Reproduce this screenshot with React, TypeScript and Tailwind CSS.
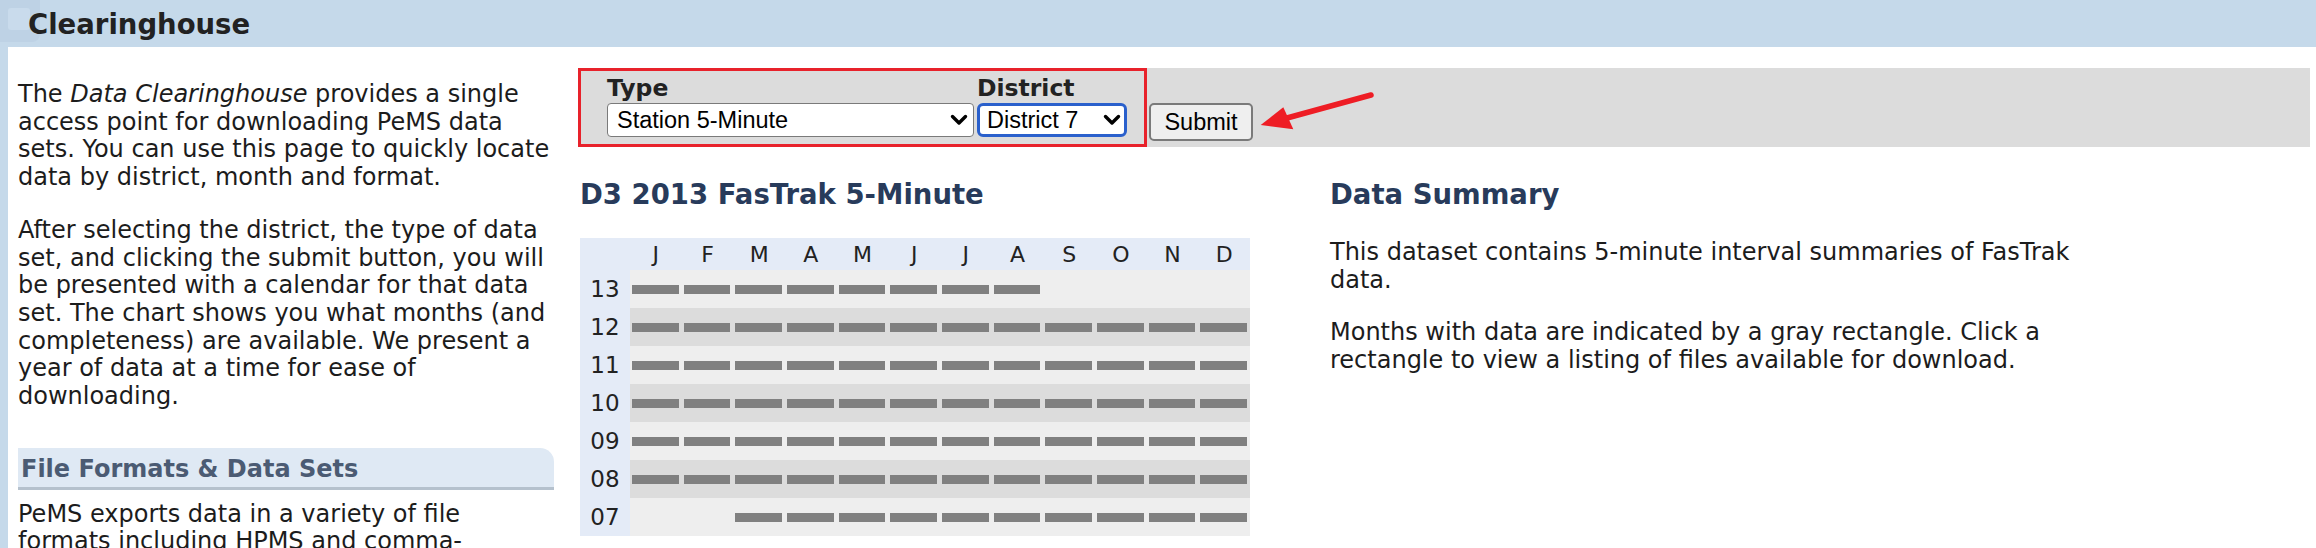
import React from 'react';

const months = ['J', 'F', 'M', 'A', 'M', 'J', 'J', 'A', 'S', 'O', 'N', 'D'];

// which months have data, per year row
const years = [
  { label: '13', from: 0, to: 8 },
  { label: '12', from: 0, to: 12 },
  { label: '11', from: 0, to: 12 },
  { label: '10', from: 0, to: 12 },
  { label: '09', from: 0, to: 12 },
  { label: '08', from: 0, to: 12 },
  { label: '07', from: 2, to: 12 },
];

function Chevron() {
  return (
    <svg
      width="18"
      height="12"
      viewBox="0 0 18 12"
      className="pointer-events-none absolute right-[6px] top-1/2 -translate-y-1/2"
    >
      <path d="M2.5 2.5 L9 9 L15.5 2.5" fill="none" stroke="#000" strokeWidth="3.4" strokeLinecap="round" strokeLinejoin="round" />
    </svg>
  );
}

function Calendar() {
  return (
    <div className="grid w-[670px] grid-cols-[50px_repeat(12,minmax(0,1fr))] bg-[#e4ebf7] font-['DejaVu_Sans',Verdana,sans-serif] text-[#222]">
      <div className="h-[32px]" />
      {months.map((m, i) => (
        <div key={i} className="flex h-[32px] items-center justify-center text-[22px]">
          {m}
        </div>
      ))}
      {years.map((y, r) => (
        <React.Fragment key={y.label}>
          <div className="flex h-[38px] items-center justify-center text-[23px]">{y.label}</div>
          {months.map((_, i) => (
            <div
              key={i}
              className={`flex h-[38px] items-center pl-[2px] pr-[3px] ${r % 2 === 0 ? 'bg-[#eeeeee]' : 'bg-[#dcdcdc]'}`}
            >
              {i >= y.from && i < y.to && <div className="h-[9px] w-full bg-[#808080]" />}
            </div>
          ))}
        </React.Fragment>
      ))}
    </div>
  );
}

export default function App() {
  return (
    <div className="relative min-h-[548px] w-[2316px] bg-white font-['DejaVu_Sans',Verdana,sans-serif] text-[#1c1c1c]">
      {/* page title bar */}
      <div className="relative flex h-[47px] items-center bg-[#c5d9ea] pl-[28px]">
        <div className="absolute left-0 top-0 h-[42px] w-[40px] rounded-br-[8px] bg-[#bed2e5]">
          <div className="ml-[8px] mt-[8px] h-[22px] w-[22px] rounded-[3px] bg-[#c9dbec]" />
        </div>
        <h1 className="relative text-[27.5px] font-bold leading-[32px] text-[#222]">Clearinghouse</h1>
      </div>

      <div className="flex border-l-[8px] border-[#c5d9ea]">
        {/* sidebar */}
        <div className="ml-[10px] w-[540px] pt-[34px] text-[24px] leading-[27.7px]">
          <p>
            The <i>Data Clearinghouse</i> provides a single access point for downloading PeMS data sets. You can use
            this page to quickly locate data by district, month and format.
          </p>
          <p className="mt-[25px]">
            After selecting the district, the type of data set, and clicking the submit button, you will be presented
            with a calendar for that data set. The chart shows you what months (and completeness) are available. We
            present a year of data at a time for ease of downloading.
          </p>
          <div className="mt-[37px] w-[536px] rounded-tr-[14px] border-b-[3px] border-[#b5c1cd] bg-[#dfe9f4] pb-[4px] pl-[3px] pt-[7px]">
            <h2 className="text-[24px] font-bold leading-[28px] text-[#4b5b73]">File Formats &amp; Data Sets</h2>
          </div>
          <p className="mt-[11px]">
            PeMS exports data in a variety of file formats including HPMS and comma-separated values.
          </p>
        </div>

        {/* main */}
        <div className="ml-[20px] mr-[6px] flex-1 pt-[21px]">
          <form className="flex bg-[#dcdcdc]" onSubmit={(e) => e.preventDefault()}>
            <div className="grid grid-cols-[367px_150px] gap-x-[3px] gap-y-[1px] border-[3px] border-[#e8222b] pb-[7px] pl-[26px] pr-[17px] pt-[3px]">
              <label className="text-[23.5px] font-bold leading-[28px] text-[#222]">Type</label>
              <label className="text-[23.5px] font-bold leading-[28px] text-[#222]">District</label>
              <div className="relative">
                <select
                  defaultValue="station5"
                  className="h-[34px] w-full appearance-none rounded-[4px] border-[1.5px] border-[#7a7a7a] bg-white pl-[9px] font-['Liberation_Sans',Arial,sans-serif] text-[23.5px] leading-[28px] text-black outline-none"
                >
                  <option value="station5">Station 5-Minute</option>
                  <option value="fastrak5">FasTrak 5-Minute</option>
                </select>
                <Chevron />
              </div>
              <div className="relative">
                <select
                  defaultValue="7"
                  className="h-[34px] w-full appearance-none rounded-[6px] border-[3px] border-[#2a60cc] bg-white pl-[7px] font-['Liberation_Sans',Arial,sans-serif] text-[23.5px] leading-[28px] text-black outline-none"
                >
                  <option value="3">District 3</option>
                  <option value="7">District 7</option>
                </select>
                <Chevron />
              </div>
            </div>
            <button
              type="submit"
              className="ml-[2px] mt-[35px] h-[38px] w-[104px] self-start rounded-[5px] border-[2px] border-[#7a7a7a] bg-[#efefef] font-['Liberation_Sans',Arial,sans-serif] text-[23.5px] text-black"
            >
              Submit
            </button>
          </form>

          <div className="flex">
            <div className="w-[672px] pl-[2px]">
              <h2 className="mt-[31px] text-[27.5px] font-bold leading-[32px] text-[#283b5b]">D3 2013 FasTrak 5-Minute</h2>
              <div className="mt-[28px]">
                <Calendar />
              </div>
            </div>
            <div className="ml-[80px] w-[780px]">
              <h2 className="mt-[31px] text-[27.5px] font-bold leading-[32px] text-[#283b5b]">Data Summary</h2>
              <p className="mt-[29px] text-[24px] leading-[27.7px]">
                This dataset contains 5-minute interval summaries of FasTrak data.
              </p>
              <p className="mt-[25px] text-[24px] leading-[27.7px]">
                Months with data are indicated by a gray rectangle. Click a rectangle to view a listing of files
                available for download.
              </p>
            </div>
          </div>
        </div>
      </div>

      {/* annotation arrow pointing at Submit */}
      <svg className="pointer-events-none absolute left-[1250px] top-[85px]" width="130" height="55" viewBox="0 0 130 55">
        <line x1="37" y1="33" x2="121" y2="10" stroke="#ee1d25" strokeWidth="5.5" strokeLinecap="round" />
        <polygon points="10.7,40 33.3,22.3 38,32.5 43.3,44.3" fill="#ee1d25" />
      </svg>
    </div>
  );
}
